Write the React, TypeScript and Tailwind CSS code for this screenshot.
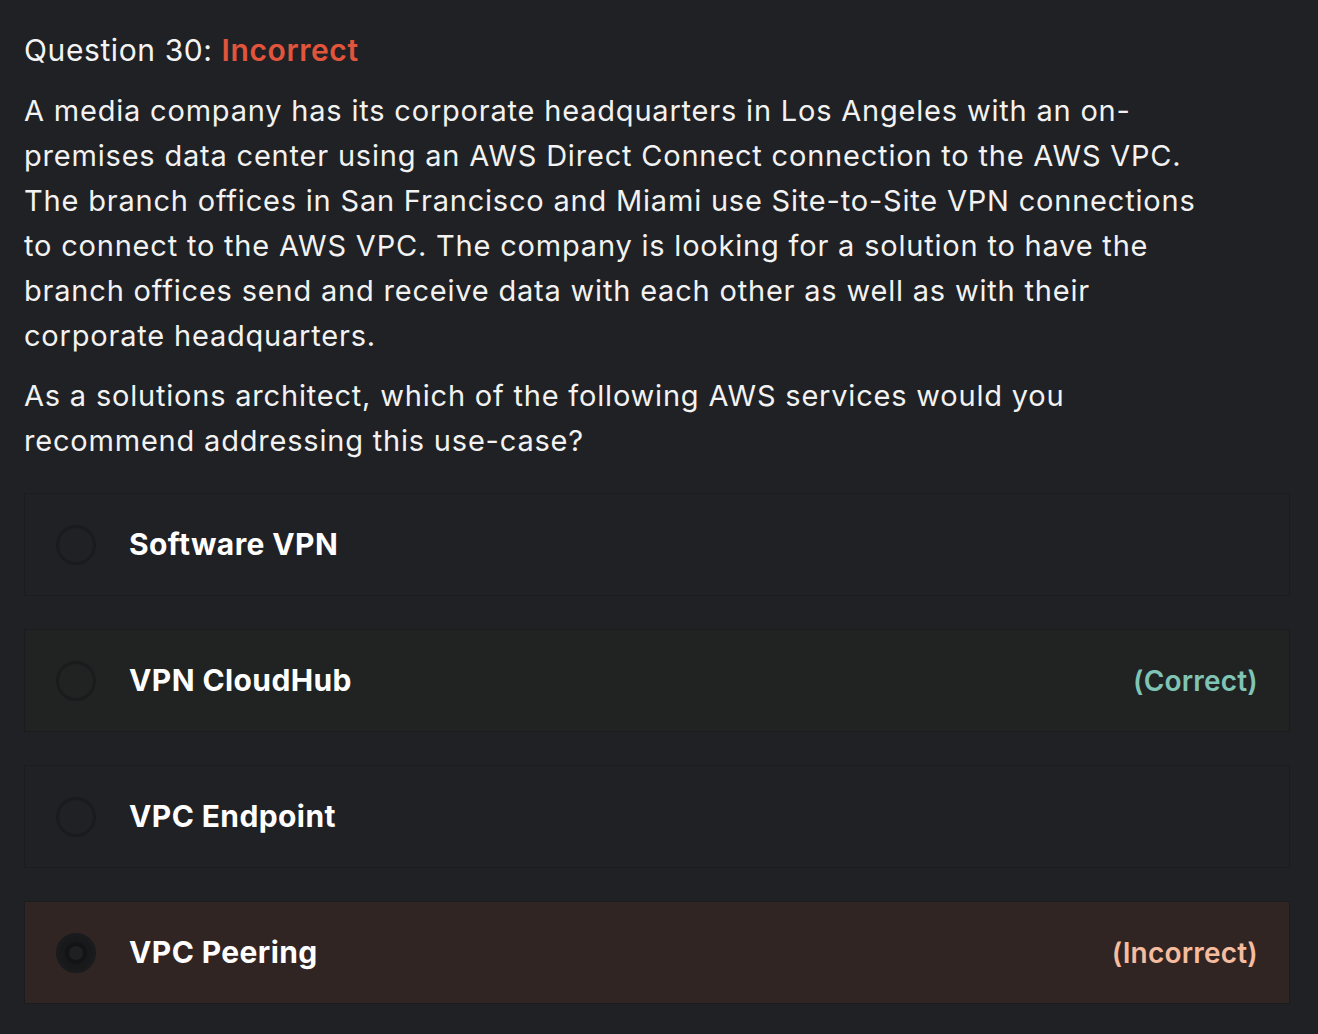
const options = [
  { label: 'Software VPN', state: 'none' },
  { label: 'VPN CloudHub', state: 'correct' },
  { label: 'VPC Endpoint', state: 'none' },
  { label: 'VPC Peering', state: 'incorrect' },
];

function Radio({ checked }: { checked: boolean }) {
  return (
    <div className="w-10 h-10 rounded-full border-[3px] border-[#1a1b1d] flex items-center justify-center shrink-0">
      {checked && (
        <div className="w-full h-full rounded-full bg-[#131415] border-[6px] border-[#18191b] flex items-center justify-center">
          <div className="w-[14px] h-[14px] rounded-full bg-[#1f2022]" />
        </div>
      )}
    </div>
  );
}

export default function App() {
  return (
    <div className="min-h-screen bg-[#202124] text-white px-6 pt-[30px] font-['Inter','Liberation_Sans',sans-serif]">
      <h2 className="text-[30px] leading-[40px] tracking-[0.6px] text-[#f4f4f5]">
        Question 30: <span className="font-semibold text-[#e0553c]">Incorrect</span>
      </h2>
      <div className="mt-[18px] w-[1185px] text-[29px] leading-[45px] tracking-[0.8px] text-[#f2f2f2]">
        <p>
          A media company has its corporate headquarters in Los Angeles with an on-premises data center using an AWS Direct Connect connection to the AWS VPC. The branch offices in San Francisco and Miami use Site-to-Site VPN connections to connect to the AWS VPC. The company is looking for a solution to have the branch offices send and receive data with each other as well as with their corporate headquarters.
        </p>
        <p className="mt-[15px]">
          As a solutions architect, which of the following AWS services would you recommend addressing this use-case?
        </p>
      </div>
      <div className="mt-[30px] mr-[4px] flex flex-col gap-[33px]">
        {options.map((o) => (
          <div
            key={o.label}
            className={
              'h-[103px] flex items-center pl-[31px] pr-[31px] border border-[#1b1c1e] ' +
              (o.state === 'correct' ? 'bg-[#202322]' : o.state === 'incorrect' ? 'bg-[#302523]' : 'bg-[#202124]')
            }
          >
            <Radio checked={o.state === 'incorrect'} />
            <span className="ml-[33px] text-[30px] font-bold tracking-[0.4px] text-white">{o.label}</span>
            {o.state === 'correct' && <span className="ml-auto text-[28px] font-semibold tracking-[0.2px] text-[#7fc4b5]">(Correct)</span>}
            {o.state === 'incorrect' && <span className="ml-auto text-[28px] font-semibold tracking-[0.2px] text-[#f5bc9f]">(Incorrect)</span>}
          </div>
        ))}
      </div>
    </div>
  );
}
